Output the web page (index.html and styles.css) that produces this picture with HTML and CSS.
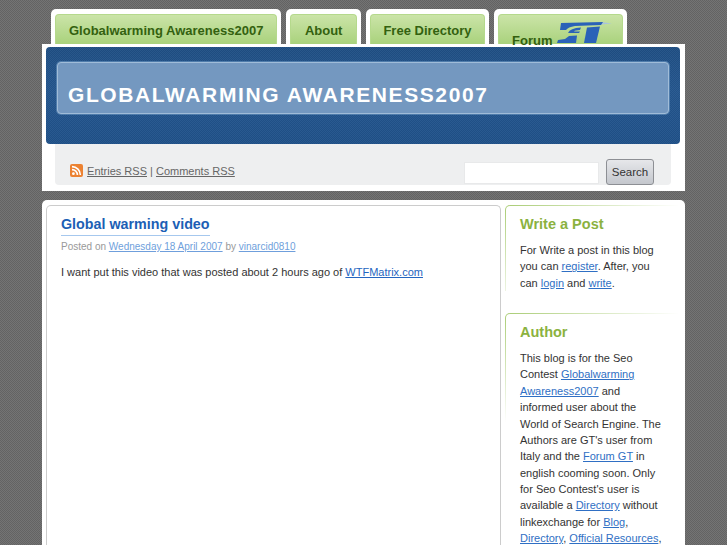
FILE: index.html
```html
<!DOCTYPE html>
<html lang="en">
<head>
  <meta charset="UTF-8" />
  <title>Globalwarming Awareness2007</title>
  <link rel="stylesheet" href="styles.css">
</head>
<body>
  <div class="wrapper">
    <ul class="tabs">
      <li class="tab tab-home"><a href="#">Globalwarming Awareness2007</a></li>
      <li class="tab"><a href="#">About</a></li>
      <li class="tab tab-dir"><a href="#">Free Directory</a></li>
      <li class="tab">
        <a href="#" class="forum">Forum
          <svg class="gt-logo" width="64" height="30" viewBox="0 0 64 30">
            <path d="M50 4 L61 5.5 L50 6.5 Z" fill="#a9c4dc"/>
            <path d="M10 5 L52 4 L50 7 L24 8 Q17 9 15 12 L9 12 Z" fill="#2a62b8"/>
            <path d="M17 15 Q19 10 30 9.5 L29 12 Q24 12 23 13.5 L29 13.5 L28 15 Z" fill="#2a62b8"/>
            <path d="M7 22 L14 21 L18 18 L26 17.5 L25 25 L6 25 Z" fill="#2a62b8"/>
            <path d="M36 9.5 L49 8.5 L45 25 L33 25 Z" fill="#2a62b8"/>
          </svg>
        </a>
      </li>
    </ul>

    <div class="header">
      <div class="banner">
        <h1 class="site-title">GLOBALWARMING AWARENESS2007</h1>
      </div>
      <div class="toolbar">
        <div class="feeds">
          <svg class="rss" width="13" height="13" viewBox="0 0 13 13">
            <rect width="13" height="13" rx="2" fill="#ec8232"/>
            <circle cx="3.4" cy="9.7" r="1.4" fill="#fff"/>
            <path d="M2 5.6 A5.4 5.4 0 0 1 7.4 11 M2 2.6 A8.4 8.4 0 0 1 10.4 11" fill="none" stroke="#fff" stroke-width="1.6"/>
          </svg>
          <a href="#">Entries RSS</a> | <a href="#">Comments RSS</a>
        </div>
        <form class="search">
          <input type="text" class="search-input">
          <button type="button" class="search-btn">Search</button>
        </form>
      </div>
    </div>

    <div class="content">
      <div class="post">
        <h2 class="post-title"><a href="#">Global warming video</a></h2>
        <p class="post-meta">Posted on <a href="#">Wednesday 18 April 2007</a> by <a href="#">vinarcid0810</a></p>
        <p class="post-body">I want put this video that was posted about 2 hours ago of <a href="#">WTFMatrix.com</a></p>
      </div>
      <div class="sidebar">
        <div class="widget">
          <div class="widget-inner">
            <h3>Write a Post</h3>
            <p>For Write a post in this blog you can <a href="#">register</a>. After, you can <a href="#">login</a> and <a href="#">write</a>.</p>
          </div>
        </div>
        <div class="widget">
          <div class="widget-inner">
            <h3>Author</h3>
            <p>This blog is for the Seo Contest <a href="#">Globalwarming Awareness2007</a> and informed user about the World of Search Engine. The Authors are GT's user from Italy and the <a href="#">Forum GT</a> in english cooming soon. Only for Seo Contest's user is available a <a href="#">Directory</a> without linkexchange for <a href="#">Blog</a>, <a href="#">Directory</a>, <a href="#">Official Resources</a>,</p>
          </div>
        </div>
      </div>
    </div>
  </div>
</body>
</html>
```
FILE: styles.css
```css
html, body {
  height: 545px;
  overflow: hidden;
}

body {
  margin: 0;
  background: repeating-conic-gradient(#747474 0 25%, #636363 0 50%) 0 0 / 2px 2px;
  font-family: "Liberation Sans", Arial, sans-serif;
  font-size: 11px;
  color: #333;
}

.wrapper {
  width: 643px;
  margin-left: 42px;
  padding-top: 9px;
}

.tabs {
  display: flex;
  gap: 5px;
  list-style: none;
  margin: 0;
  padding: 0 0 0 9px;
  height: 35px;
}

.tab {
  background: #fff;
  border-radius: 5px 5px 0 0;
  padding: 5px 4px 0;
}

.tab a {
  display: block;
  height: 30px;
  box-sizing: border-box;
  padding: 8px 13.5px 0;
  background: linear-gradient(#cbe4a8, #a9d27c);
  border: 1px solid #b5d98c;
  border-bottom: 0;
  border-radius: 4px 4px 0 0;
  color: #33610f;
  font-size: 13px;
  font-weight: bold;
  text-decoration: none;
}

.tab-home a {
  padding: 8px 13px 0;
}

.tab-dir a {
  padding: 8px 12.5px 0;
}

.tab a.forum {
  position: relative;
  width: 125px;
  padding: 18px 0 0 13px;
}

.gt-logo {
  position: absolute;
  left: 52px;
  top: 3px;
}

.header {
  background: #fff;
  height: 147px;
  padding: 3px 5px 0 4px;
  box-sizing: border-box;
}

.banner {
  height: 97px;
  box-sizing: border-box;
  padding: 15px 11px 0;
  background: repeating-conic-gradient(rgba(255,255,255,0.04) 0 25%, rgba(0,0,0,0.04) 0 50%) 0 0 / 2px 2px,
    linear-gradient(#1f4f84, #24568f 45%, #1f5189);
  border-radius: 4px;
}

.site-title {
  margin: 0;
  height: 52px;
  box-sizing: border-box;
  padding-left: 10px;
  background: #7498c0;
  border: 1px solid #a0bcd8;
  box-shadow: 0 0 0 1px #4f7cab;
  border-radius: 4px;
  color: #fff;
  font-size: 21px;
  font-weight: bold;
  letter-spacing: 1.6px;
  line-height: 64px;
}

.toolbar {
  display: flex;
  justify-content: space-between;
  height: 41px;
  margin: 0 9px;
  padding: 0 17px 0 15px;
  background: #eeeff0;
  border-radius: 0 0 4px 4px;
}

.feeds {
  height: 13px;
  margin-top: 20px;
  line-height: 13px;
  color: #666;
}

.feeds a {
  color: #666;
}

.rss {
  margin-right: 1px;
  vertical-align: -2px;
}

.search {
  display: flex;
  gap: 7px;
  margin-top: 15px;
}

.search-input {
  width: 135px;
  height: 22px;
  box-sizing: border-box;
  margin: 3px 0 0;
  border: 1px solid #e8e9ea;
  background: #fff;
}

.search-btn {
  width: 48px;
  height: 26px;
  padding: 0;
  background: linear-gradient(#e6e7ea, #c4c7cd);
  border: 1px solid #8d8f94;
  border-radius: 3px;
  color: #333;
  font-family: inherit;
  font-size: 11.5px;
}

.content {
  display: flex;
  gap: 4px;
  box-sizing: border-box;
  height: 345px;
  overflow: hidden;
  margin-top: 9px;
  padding: 5px 0 0 4px;
  background: #fff;
  border-radius: 5px 5px 0 0;
}

.post {
  width: 455px;
  box-sizing: border-box;
  padding: 8px 14px;
  border: 1px solid #ccc;
  border-bottom: 0;
  border-radius: 5px 5px 0 0;
}

.post-title {
  margin: 0;
  font-size: 14.3px;
  line-height: 20px;
}

.post-title a {
  display: inline-block;
  color: #1c5fb5;
  text-decoration: none;
  border-bottom: 1px solid #a6c8ee;
  padding-bottom: 1px;
}

.post-meta {
  margin: 5px 0 0;
  color: #999;
  font-size: 10px;
}

.post-meta a {
  color: #6f9fdc;
}

.post-body {
  margin: 14px 0 0;
}

.post-body a {
  color: #2465c0;
}

.sidebar {
  width: 175px;
}

.widget {
  padding: 1px 0 0 1px;
  margin-bottom: 22px;
  background: linear-gradient(to bottom right, #a9cc74 0, #fff 50%) top left / 100% 110px no-repeat;
  border-top-left-radius: 5px;
}

.widget-inner {
  padding: 8px 15px 0 14px;
  background: #fff;
  border-top-left-radius: 4px;
}

.widget h3 {
  margin: 0 0 8px;
  color: #8bb23f;
  font-size: 14.5px;
  line-height: 20px;
}

.widget p {
  margin: 0;
  line-height: 16.36px;
}

.widget a {
  color: #2f6fc4;
}
```
